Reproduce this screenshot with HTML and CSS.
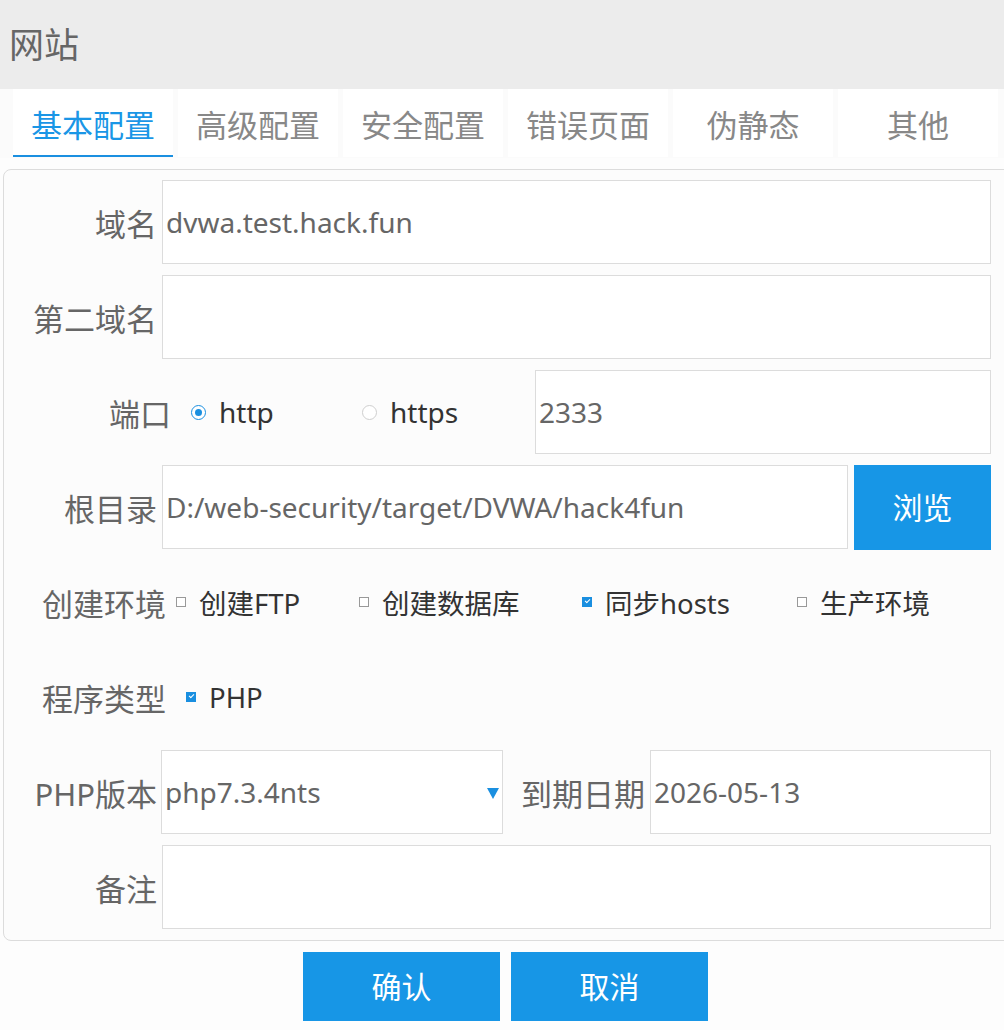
FILE: index.html
```html
<!DOCTYPE html>
<html lang="zh-CN">
<head>
<meta charset="utf-8">
<title>网站</title>
<link rel="stylesheet" href="styles.css">
</head>
<body>
<header class="titlebar">网站</header>
<nav class="tabs">
  <div class="tab active">基本配置</div>
  <div class="tab">高级配置</div>
  <div class="tab">安全配置</div>
  <div class="tab">错误页面</div>
  <div class="tab">伪静态</div>
  <div class="tab">其他</div>
</nav>
<section class="panel">
  <div class="row">
    <label class="label">域名</label>
    <div class="field grow">dvwa.test.hack.fun</div>
  </div>
  <div class="row">
    <label class="label">第二域名</label>
    <div class="field grow"></div>
  </div>
  <div class="row">
    <label class="label label-port">端口</label>
    <div class="radios">
      <span class="opt opt-http"><span class="radio checked"></span>http</span>
      <span class="opt opt-https"><span class="radio"></span>https</span>
    </div>
    <div class="field grow">2333</div>
  </div>
  <div class="row">
    <label class="label">根目录</label>
    <div class="field grow">D:/web-security/target/DVWA/hack4fun</div>
    <div class="btn btn-browse">浏览</div>
  </div>
  <div class="row">
    <label class="label label-wide">创建环境</label>
    <div class="checks">
      <span class="chk-opt"><span class="box"></span>创建FTP</span>
      <span class="chk-opt"><span class="box"></span>创建数据库</span>
      <span class="chk-opt"><span class="box checked"></span>同步hosts</span>
      <span class="chk-opt"><span class="box"></span>生产环境</span>
    </div>
  </div>
  <div class="row">
    <label class="label label-wide">程序类型</label>
    <div class="checks checks-type">
      <span class="chk-opt"><span class="box checked"></span>PHP</span>
    </div>
  </div>
  <div class="row">
    <label class="label">PHP版本</label>
    <div class="field select">php7.3.4nts<span class="arrow"></span></div>
    <label class="label label-date">到期日期</label>
    <div class="field grow">2026-05-13</div>
  </div>
  <div class="row">
    <label class="label">备注</label>
    <div class="field grow"></div>
  </div>
</section>
<div class="actions">
  <div class="btn btn-action">确认</div>
  <div class="btn btn-action">取消</div>
</div>
</body>
</html>
```
FILE: styles.css
```css
* { box-sizing: border-box; }
body {
  margin: 0;
  background: #fdfdfd;
  font-family: "Noto Sans", "Noto Sans CJK SC", sans-serif;
  color: #666;
}
.titlebar {
  height: 89px;
  background: #ececec;
  padding-left: 9px;
  font-size: 35px;
  line-height: 89px;
  color: #666;
}
.tabs {
  display: flex;
  gap: 5px;
  padding-left: 13px;
  background: #fbfbfb;
  height: 69px;
  margin-bottom: 11px;
}
.tab {
  width: 160px;
  height: 68px;
  background: #fff;
  text-align: center;
  font-size: 31px;
  line-height: 72px;
  color: #888;
}
.tab.active {
  color: #1a96e6;
  border-bottom: 2px solid #1a8fe0;
}
.panel {
  margin-left: 3px;
  width: 1010px;
  border: 1px solid #dcdcdc;
  border-radius: 8px;
  background: #fcfcfc;
  padding: 10px 0 0 0;
}
.row {
  display: flex;
  align-items: center;
  gap: 5px;
  height: 84px;
  margin-bottom: 11px;
  width: 987px;
}
.label {
  width: 153px;
  flex: none;
  text-align: right;
  font-size: 31px;
  color: #666;
  white-space: nowrap;
}
.label-port { width: 167px; }
.label-wide { width: 162px; }
.label-date { width: 137px; }
.field {
  height: 84px;
  background: #fff;
  border: 1px solid #dcdcdc;
  font-size: 28px;
  line-height: 82px;
  padding-left: 3px;
  color: #666;
  white-space: nowrap;
  overflow: hidden;
}
.grow { flex: 1; }
.select {
  width: 342px;
  flex: none;
  position: relative;
  margin-left: -1px;
}
.arrow {
  position: absolute;
  right: 3px;
  top: 37px;
  width: 0;
  height: 0;
  border-left: 6px solid transparent;
  border-right: 6px solid transparent;
  border-top: 11px solid #1a8fe0;
}
.radios {
  display: flex;
  align-items: center;
  margin-left: 15px;
  font-size: 28px;
  color: #333;
}
.opt { display: flex; align-items: center; gap: 13px; }
.opt-http { width: 171px; }
.opt-https { width: 168px; }
.radio {
  width: 15px;
  height: 15px;
  border-radius: 50%;
  border: 1px solid #cfcfcf;
  background: #fff;
  position: relative;
}
.radio.checked { border-color: #1a8fe0; }
.radio.checked::after {
  content: "";
  position: absolute;
  left: 3px;
  top: 3px;
  width: 7px;
  height: 7px;
  border-radius: 50%;
  background: #1a8fe0;
}
.checks {
  display: flex;
  align-items: center;
  margin-left: 5px;
  font-size: 27.5px;
  color: #333;
}
.checks-type { margin-left: 15px; }
.chk-opt { display: flex; align-items: center; gap: 13px; }
.chk-opt:nth-child(1) { width: 183px; }
.chk-opt:nth-child(2) { width: 223px; }
.chk-opt:nth-child(3) { width: 215px; }
.box {
  width: 10px;
  height: 10px;
  border: 1px solid #999;
  background: #fff;
  position: relative;
}
.box.checked {
  background: #1a8fe0;
  border-color: #1a8fe0;
}
.box.checked::after {
  content: "";
  position: absolute;
  left: 2px;
  top: 1px;
  width: 4px;
  height: 2px;
  border-left: 1.5px solid #fff;
  border-bottom: 1.5px solid #fff;
  transform: rotate(-45deg);
}
.btn {
  background: #1796e6;
  color: #fff;
  text-align: center;
  font-size: 30px;
}
.btn-browse {
  width: 137px;
  height: 85px;
  line-height: 85px;
  flex: none;
  margin-left: 1px;
}
.actions {
  display: flex;
  justify-content: center;
  gap: 11px;
  margin-top: 11px;
  padding-left: 7px;
}
.btn-action {
  width: 197px;
  height: 69px;
  line-height: 69px;
}
```
